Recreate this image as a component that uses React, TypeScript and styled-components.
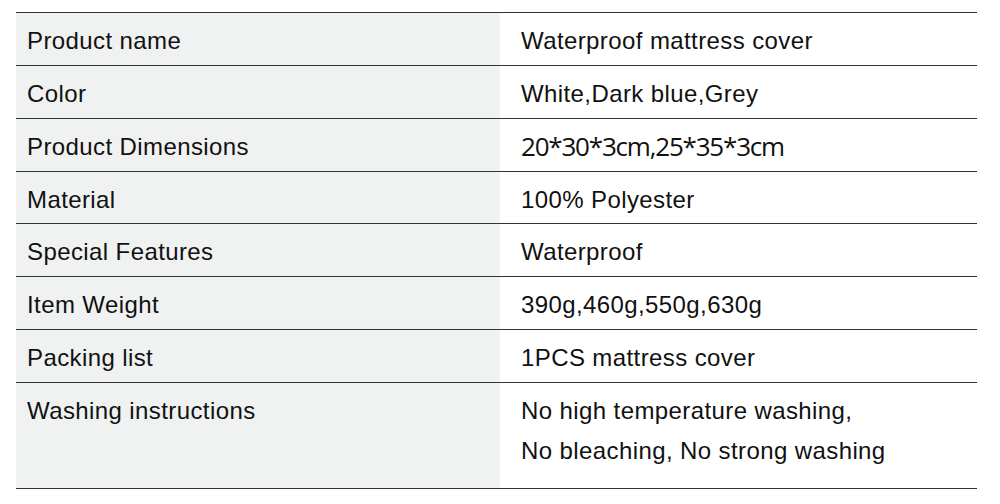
import React from "react";
import styled, { createGlobalStyle } from "styled-components";

const Global = createGlobalStyle`
  html, body { margin: 0; padding: 0; background: #ffffff; }
  body { font-family: "Liberation Sans", Arial, sans-serif; color: #111111; }
`;

const Page = styled.div`
  width: 1000px;
  height: 504px;
  padding: 12px 23px 0 16px;
  box-sizing: border-box;
`;

const Table = styled.div`
  width: 961px;
  border-top: 1px solid #333333;
  display: flex;
  flex-direction: column;
`;

const Row = styled.div<{ $h: number }>`
  display: grid;
  grid-template-columns: 484px 477px;
  height: ${(p) => p.$h}px;
  box-sizing: border-box;
  border-bottom: 1px solid #333333;
`;

const Label = styled.div`
  background: #f0f1f1;
  padding: 8px 0 0 11px;
  font-size: 24px;
  letter-spacing: 0.4px;
  line-height: 40px;
  color: #111111;
`;

const Value = styled.div<{ $alt?: boolean }>`
  padding: ${(p) => (p.$alt ? "7px" : "8px")} 0 0 21px;
  font-family: ${(p) =>
    p.$alt ? '"Open Sans", "Noto Sans", sans-serif' : '"Liberation Sans", Arial, sans-serif'};
  font-size: ${(p) => (p.$alt ? "26px" : "24px")};
  font-weight: ${(p) => (p.$alt ? 500 : 400)};
  letter-spacing: ${(p) => (p.$alt ? "-1.2px" : "0.4px")};
  line-height: 40px;
  color: #111111;
`;

const rows: { label: string; value: string[]; h: number; alt?: boolean }[] = [
  { label: "Product name", value: ["Waterproof mattress cover"], h: 53 },
  { label: "Color", value: ["White,Dark blue,Grey"], h: 53 },
  { label: "Product Dimensions", value: ["20*30*3cm,25*35*3cm"], h: 53, alt: true },
  { label: "Material", value: ["100% Polyester"], h: 52 },
  { label: "Special Features", value: ["Waterproof"], h: 53 },
  { label: "Item Weight", value: ["390g,460g,550g,630g"], h: 53 },
  { label: "Packing list", value: ["1PCS mattress cover"], h: 53 },
  {
    label: "Washing instructions",
    value: ["No high temperature washing,", "No bleaching, No strong washing"],
    h: 106,
  },
];

export default function App() {
  return (
    <>
      <Global />
      <Page>
        <Table>
          {rows.map((r) => (
            <Row key={r.label} $h={r.h}>
              <Label>{r.label}</Label>
              <Value $alt={r.alt}>
                {r.value.map((v) => (
                  <div key={v}>{v}</div>
                ))}
              </Value>
            </Row>
          ))}
        </Table>
      </Page>
    </>
  );
}
